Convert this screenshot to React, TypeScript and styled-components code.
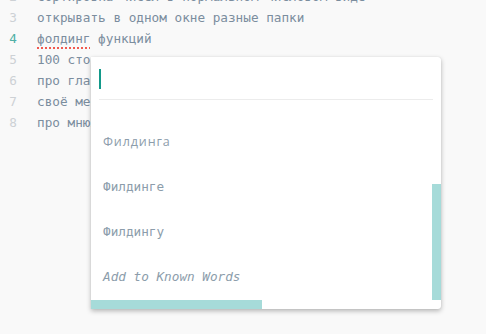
import React from "react";
import styled, { createGlobalStyle } from "styled-components";

const Global = createGlobalStyle`
  html, body { margin: 0; padding: 0; background: #f9f9f9; }
  body { width: 486px; height: 334px; overflow: hidden; }
`;

const mono = `"DejaVu Sans Mono", "Liberation Mono", monospace`;

const Editor = styled.div`
  position: relative;
  width: 486px;
  height: 334px;
  background: #f9f9f9;
  overflow: hidden;
  font-family: ${mono};
  font-size: 12.7px;
`;

const Lines = styled.div`
  display: flex;
  flex-direction: column;
  margin-top: -14px;
`;

const Line = styled.div`
  display: flex;
  align-items: center;
  height: 21px;
  line-height: 21px;
  white-space: pre;
`;

const Num = styled.span<{ $active?: boolean }>`
  width: 17px;
  text-align: right;
  flex: none;
  color: ${(p) => (p.$active ? "#4fb0a6" : "#cdd1d5")};
  margin-right: 20px;
`;

const Code = styled.span`
  color: #7b8d9e;
`;

const Misspelled = styled.span`
  text-decoration: underline dotted #f05a50;
  text-decoration-thickness: 2px;
  text-underline-offset: 4px;
`;

const Popup = styled.div`
  position: absolute;
  left: 91px;
  top: 57px;
  width: 350px;
  height: 252px;
  background: #fff;
  border-radius: 0 3px 3px 0;
  box-shadow: 0 2px 5px rgba(0, 0, 0, 0.28), 0 0 1px rgba(0, 0, 0, 0.15);
  overflow: hidden;
  display: flex;
  flex-direction: column;
`;

const InputRow = styled.div`
  height: 43px;
  margin: 0 8px;
  border-bottom: 1px solid #ececec;
  display: flex;
  align-items: flex-start;
  padding-top: 12px;
  box-sizing: border-box;
  flex: none;
`;

const Caret = styled.div`
  width: 2px;
  height: 20px;
  background: #13998a;
`;

const List = styled.div`
  display: flex;
  flex-direction: column;
  padding-top: 19px;
`;

const Item = styled.div<{ $sans?: boolean; $italic?: boolean }>`
  height: 45px;
  display: flex;
  align-items: center;
  padding-left: 12px;
  color: #8c9dab;
  font-family: ${(p) => (p.$sans ? `"Open Sans", "Noto Sans", sans-serif` : mono)};
  font-size: ${(p) => (p.$sans ? "12.5px" : "12.7px")};
  letter-spacing: ${(p) => (p.$sans ? "0.9px" : "0")};
  font-style: ${(p) => (p.$italic ? "italic" : "normal")};
`;

const VScroll = styled.div`
  position: absolute;
  right: 0;
  top: 127px;
  width: 9px;
  height: 116px;
  background: #a6dbd9;
`;

const HScroll = styled.div`
  position: absolute;
  left: 0;
  bottom: 0;
  width: 171px;
  height: 9px;
  background: #a6dbd9;
`;

const lines: { n: number; text: React.ReactNode; active?: boolean }[] = [
  { n: 2, text: "сортировка чисел в нормальном числовом виде" },
  { n: 3, text: "открывать в одном окне разные папки" },
  {
    n: 4,
    active: true,
    text: (
      <>
        <Misspelled>фолдинг</Misspelled> функций
      </>
    ),
  },
  { n: 5, text: "100 стоков" },
  { n: 6, text: "про главное" },
  { n: 7, text: "своё меню" },
  { n: 8, text: "про мнюхи" },
];

export default function App() {
  return (
    <>
      <Global />
      <Editor>
        <Lines>
          {lines.map((l) => (
            <Line key={l.n}>
              <Num $active={l.active}>{l.n}</Num>
              <Code>{l.text}</Code>
            </Line>
          ))}
        </Lines>
        <Popup>
          <InputRow>
            <Caret />
          </InputRow>
          <List>
            <Item $sans>Филдинга</Item>
            <Item>Филдинге</Item>
            <Item>Филдингу</Item>
            <Item $italic>Add to Known Words</Item>
          </List>
          <VScroll />
          <HScroll />
        </Popup>
      </Editor>
    </>
  );
}
